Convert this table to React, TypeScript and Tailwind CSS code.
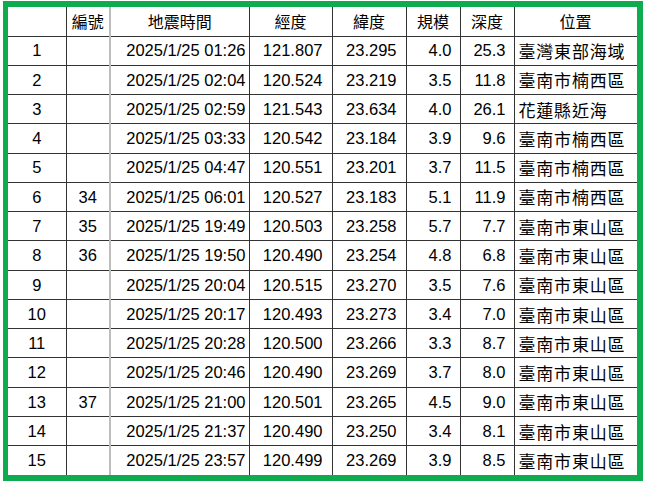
import React from "react";

const rows: [string, string, string, string, string, string, string, string][] = [
  ["1", "", "2025/1/25 01:26", "121.807", "23.295", "4.0", "25.3", "臺灣東部海域"],
  ["2", "", "2025/1/25 02:04", "120.524", "23.219", "3.5", "11.8", "臺南市楠西區"],
  ["3", "", "2025/1/25 02:59", "121.543", "23.634", "4.0", "26.1", "花蓮縣近海"],
  ["4", "", "2025/1/25 03:33", "120.542", "23.184", "3.9", "9.6", "臺南市楠西區"],
  ["5", "", "2025/1/25 04:47", "120.551", "23.201", "3.7", "11.5", "臺南市楠西區"],
  ["6", "34", "2025/1/25 06:01", "120.527", "23.183", "5.1", "11.9", "臺南市楠西區"],
  ["7", "35", "2025/1/25 19:49", "120.503", "23.258", "5.7", "7.7", "臺南市東山區"],
  ["8", "36", "2025/1/25 19:50", "120.490", "23.254", "4.8", "6.8", "臺南市東山區"],
  ["9", "", "2025/1/25 20:04", "120.515", "23.270", "3.5", "7.6", "臺南市東山區"],
  ["10", "", "2025/1/25 20:17", "120.493", "23.273", "3.4", "7.0", "臺南市東山區"],
  ["11", "", "2025/1/25 20:28", "120.500", "23.266", "3.3", "8.7", "臺南市東山區"],
  ["12", "", "2025/1/25 20:46", "120.490", "23.269", "3.7", "8.0", "臺南市東山區"],
  ["13", "37", "2025/1/25 21:00", "120.501", "23.265", "4.5", "9.0", "臺南市東山區"],
  ["14", "", "2025/1/25 21:37", "120.490", "23.250", "3.4", "8.1", "臺南市東山區"],
  ["15", "", "2025/1/25 23:57", "120.499", "23.269", "3.9", "8.5", "臺南市東山區"],
];

const headers = ["", "編號", "地震時間", "經度", "緯度", "規模", "深度", "位置"];

const cellBase = "border border-[#333] p-0 align-middle";

export default function App() {
  return (
    <div className="w-[656px] h-[486px] bg-white pl-[3px] pt-[1px]">
      <div className="w-[640px] h-[480px] border-l-[5px] border-t-[6px] border-r-[6px] border-b-[6px] border-[#0fac4f] overflow-hidden">
        <table
          className="table-fixed border-collapse w-[629px] text-black"
          style={{ fontFamily: '"Liberation Sans", "Noto Sans CJK TC", sans-serif' }}
        >
          <colgroup>
            <col className="w-[58px]" />
            <col className="w-[44px]" />
            <col className="w-[139px]" />
            <col className="w-[83px]" />
            <col className="w-[74px]" />
            <col className="w-[54px]" />
            <col className="w-[54px]" />
            <col className="w-[123px]" />
          </colgroup>
          <thead>
            <tr className="h-[29px]">
              {headers.map((h, i) => (
                <th
                  key={i}
                  className={`${cellBase} border-t-0 ${i === 0 ? "border-l-0" : ""} ${
                    i === 2 ? "border-l-2 border-l-[#bdbdbd]" : ""
                  } text-center font-normal text-[16px] leading-none`}
                  style={{ fontFamily: '"Noto Sans CJK TC", sans-serif' }}
                >
                  {h}
                </th>
              ))}
            </tr>
          </thead>
          <tbody>
            {rows.map((r, ri) => (
              <tr key={ri} className="h-[29.27px]">
                <td className={`${cellBase} border-l-0 ${ri === rows.length - 1 ? "border-b-0" : ""} text-center text-[16.5px] leading-none`}>
                  {r[0]}
                </td>
                <td className={`${cellBase} ${ri === rows.length - 1 ? "border-b-0" : ""} text-center text-[16.5px] leading-none`}>
                  {r[1]}
                </td>
                <td className={`${cellBase} border-l-2 border-l-[#bdbdbd] ${ri === rows.length - 1 ? "border-b-0" : ""} text-right pr-[3px] text-[16.5px] leading-none`}>
                  {r[2]}
                </td>
                <td className={`${cellBase} ${ri === rows.length - 1 ? "border-b-0" : ""} text-right pr-[9px] text-[16.5px] leading-none`}>
                  {r[3]}
                </td>
                <td className={`${cellBase} ${ri === rows.length - 1 ? "border-b-0" : ""} text-right pr-[9px] text-[16.5px] leading-none`}>
                  {r[4]}
                </td>
                <td className={`${cellBase} ${ri === rows.length - 1 ? "border-b-0" : ""} text-right pr-[8px] text-[16.5px] leading-none`}>
                  {r[5]}
                </td>
                <td className={`${cellBase} ${ri === rows.length - 1 ? "border-b-0" : ""} text-right pr-[8px] text-[16.5px] leading-none`}>
                  {r[6]}
                </td>
                <td
                  className={`${cellBase} ${ri === rows.length - 1 ? "border-b-0" : ""} text-left pl-[4px] text-[17px] tracking-[0.8px] leading-none whitespace-nowrap`}
                  style={{ fontFamily: '"Noto Sans CJK TC", sans-serif' }}
                >
                  {r[7]}
                </td>
              </tr>
            ))}
          </tbody>
        </table>
      </div>
    </div>
  );
}
